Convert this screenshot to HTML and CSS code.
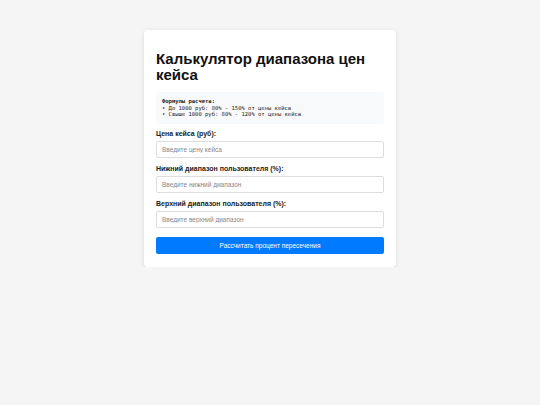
FILE: index.html
```html
<!DOCTYPE html>
<html lang="ru">
<head>
<meta charset="utf-8">
<link rel="stylesheet" href="styles.css">
</head>
<body>
<div class="card">
  <h1 class="title">Калькулятор диапазона цен кейса</h1>
  <div class="formula"><b>Формулы расчета:</b><br>• До 1000 руб: 80% - 150% от цены кейса<br>• Свыше 1000 руб: 80% - 120% от цены кейса</div>
  <div class="group">
    <label class="label">Цена кейса (руб):</label>
    <input class="input" type="text" placeholder="Введите цену кейса">
  </div>
  <div class="group">
    <label class="label">Нижний диапазон пользователя (%):</label>
    <input class="input" type="text" placeholder="Введите нижний диапазон">
  </div>
  <div class="group">
    <label class="label">Верхний диапазон пользователя (%):</label>
    <input class="input" type="text" placeholder="Введите верхний диапазон">
  </div>
  <button class="btn">Рассчитать процент пересечения</button>
</div>
</body>
</html>
```
FILE: styles.css
```css
html, body { margin: 0; padding: 0; }
body {
  background: #f5f5f5;
  font-family: "Liberation Sans", Arial, sans-serif;
  padding-top: 30px;
}
.card {
  width: 228px;
  margin: 0 auto;
  background: #fff;
  border-radius: 4px;
  box-shadow: 0 1px 4px rgba(0,0,0,0.12);
  padding: 12px 12px 13px;
}
.title {
  font-size: 15px;
  line-height: 16px;
  font-weight: bold;
  color: #111;
  margin: 9px 0 9px;
}
.formula {
  background: #f8f9fa;
  border-radius: 2px;
  padding: 6px 6px;
  font-family: "DejaVu Sans Mono", monospace;
  font-size: 5.5px;
  line-height: 6.5px;
  color: #222;
  margin-bottom: 5px;
}
.group { margin-bottom: 6px; }
.label {
  display: block;
  font-size: 7px;
  font-weight: bold;
  color: #222;
  line-height: 10px;
  margin-bottom: 2px;
}
.input {
  display: block;
  box-sizing: border-box;
  width: 100%;
  height: 17px;
  border: 1px solid #ddd;
  border-radius: 2px;
  padding: 0 5px;
  font-family: "Liberation Sans", Arial, sans-serif;
  font-size: 6.5px;
  margin: 0;
}
.input::placeholder { color: #888; }
.btn {
  display: block;
  width: 100%;
  height: 17px;
  border: none;
  border-radius: 2px;
  background: #007bff;
  color: #fff;
  font-family: "Liberation Sans", Arial, sans-serif;
  font-size: 6.5px;
  margin-top: 9px;
  padding: 0;
}
```
